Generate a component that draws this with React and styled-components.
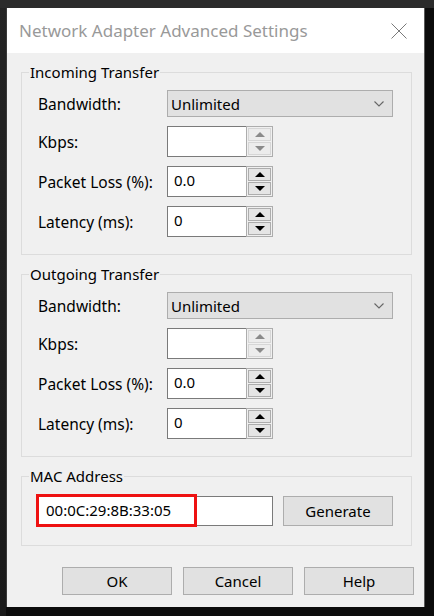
import styled, { createGlobalStyle } from "styled-components";

const Global = createGlobalStyle`
  html, body {
    margin: 0;
    padding: 0;
  }
  body {
    width: 434px;
    height: 616px;
    overflow: hidden;
    background:
      linear-gradient(#2b2b2b, #2b2b2b) top left / 100% 8px no-repeat,
      linear-gradient(#242424, #1a1a1a) top left / 6px 100% no-repeat,
      #0c0c0c;
    font-family: "Noto Sans", "DejaVu Sans", sans-serif;
    font-size: 15px;
    color: #000;
  }
`;

const Desktop = styled.div`
  padding: 8px 0 0 7px;
`;

const Dialog = styled.div`
  width: 417px;
  height: 599px;
  background: #f0f0f0;
  box-shadow: -1px 0 0 #3a3a3a, 1px 0 0 #5a5a5a;
  display: flex;
  flex-direction: column;
`;

const TitleBar = styled.div`
  height: 45px;
  background: #fff;
  display: flex;
  align-items: center;
  justify-content: space-between;
  padding: 0 17px 0 12px;
`;

const Title = styled.span`
  font-size: 17px;
  color: #999;
`;

const Body = styled.div`
  padding: 9px 12px 0 14px;
  display: flex;
  flex-direction: column;
  gap: 9px;
`;

const Group = styled.fieldset`
  margin: 0;
  border: 1px solid #dcdcdc;
  padding: 8px 12px ${(p) => p.$bottom}px 7px;
  min-width: 0;
`;

const Legend = styled.legend`
  padding: 0 1px;
  line-height: 20px;
  font-size: 15px;
`;

const Rows = styled.div`
  display: grid;
  grid-template-columns: 129px auto;
  row-gap: 9px;
  padding-left: 9px;
  align-items: center;
`;

const Label = styled.span`
  line-height: 20px;
  font-size: 15.5px;
`;

const Select = styled.div`
  width: 226px;
  height: 27px;
  box-sizing: border-box;
  background: #e1e1e1;
  border: 1px solid #adadad;
  display: flex;
  align-items: center;
  justify-content: space-between;
  padding: 0 8px 0 3px;
`;

const Spin = styled.div`
  display: flex;
  width: 106px;
  height: 31px;
`;

const Field = styled.div`
  flex: 1;
  background: #fff;
  border: 1px solid #7a7a7a;
  border-right: none;
  padding: 0 6px;
  line-height: 26px;
`;

const SpinButtons = styled.div`
  width: 27px;
  box-sizing: border-box;
  border: 1px solid #adadad;
  background: #f0f0f0;
  padding: 1px;
  display: flex;
  flex-direction: column;
  gap: 1px;
`;

const SpinBtn = styled.div`
  flex: 1;
  background: ${(p) => (p.$disabled ? "#ececec" : "#e5e5e5")};
  border: 1px solid ${(p) => (p.$disabled ? "#d6d6d6" : "#adadad")};
  display: flex;
  align-items: center;
  justify-content: center;

  &::after {
    content: "";
    width: 0;
    height: 0;
    border-left: 5px solid transparent;
    border-right: 5px solid transparent;
    ${(p) => (p.$down ? "border-top" : "border-bottom")}: 5px solid
      ${(p) => (p.$disabled ? "#8a8a8a" : "#000")};
  }
`;

const MacRow = styled.div`
  display: flex;
  gap: 10px;
  padding: 2px 0 0 8px;
`;

const MacField = styled.div`
  position: relative;
  width: 236px;
  height: 30px;
  box-sizing: border-box;
  background: #fff;
  border: 1px solid #7a7a7a;
  padding-left: 8px;
  line-height: 26px;
`;

const Highlight = styled.div`
  position: absolute;
  left: -2px;
  top: -3px;
  width: 161px;
  height: 33px;
  box-sizing: border-box;
  border: 3px solid #ee1111;
`;

const Button = styled.div`
  width: ${(p) => p.$w || 110}px;
  height: ${(p) => p.$h || 28}px;
  box-sizing: border-box;
  background: #e1e1e1;
  border: 1px solid #adadad;
  display: flex;
  align-items: center;
  justify-content: center;
`;

const Footer = styled.div`
  margin-top: 21px;
  padding: 0 10px;
  display: flex;
  justify-content: flex-end;
  gap: 11px;
`;

const Chevron = () => (
  <svg width="10" height="6" viewBox="0 0 10 6">
    <polyline points="0.5,0.5 5,5 9.5,0.5" fill="none" stroke="#666" strokeWidth="1.1" />
  </svg>
);

const CloseIcon = () => (
  <svg width="16" height="16" viewBox="0 0 16 16">
    <path d="M0.5 0.5 L15.5 15.5 M15.5 0.5 L0.5 15.5" stroke="#7a7a7a" strokeWidth="1" />
  </svg>
);

function SpinBox({ value, disabled }) {
  return (
    <Spin>
      <Field>{value}</Field>
      <SpinButtons>
        <SpinBtn $disabled={disabled} />
        <SpinBtn $disabled={disabled} $down />
      </SpinButtons>
    </Spin>
  );
}

function TransferGroup({ title, bottom }) {
  return (
    <Group $bottom={bottom}>
      <Legend>{title}</Legend>
      <Rows>
        <Label>Bandwidth:</Label>
        <Select>
          <span>Unlimited</span>
          <Chevron />
        </Select>
        <Label>Kbps:</Label>
        <SpinBox value="" disabled />
        <Label>Packet Loss (%):</Label>
        <SpinBox value="0.0" />
        <Label>Latency (ms):</Label>
        <SpinBox value="0" />
      </Rows>
    </Group>
  );
}

export default function App() {
  return (
    <Desktop>
      <Global />
      <Dialog>
        <TitleBar>
          <Title>Network Adapter Advanced Settings</Title>
          <CloseIcon />
        </TitleBar>
        <Body>
          <TransferGroup title="Incoming Transfer" bottom={17} />
          <TransferGroup title="Outgoing Transfer" bottom={17} />
          <Group $bottom={19}>
            <Legend>MAC Address</Legend>
            <MacRow>
              <MacField>
                00:0C:29:8B:33:05
                <Highlight />
              </MacField>
              <Button $h={30}>Generate</Button>
            </MacRow>
          </Group>
        </Body>
        <Footer>
          <Button>OK</Button>
          <Button>Cancel</Button>
          <Button>Help</Button>
        </Footer>
      </Dialog>
    </Desktop>
  );
}
